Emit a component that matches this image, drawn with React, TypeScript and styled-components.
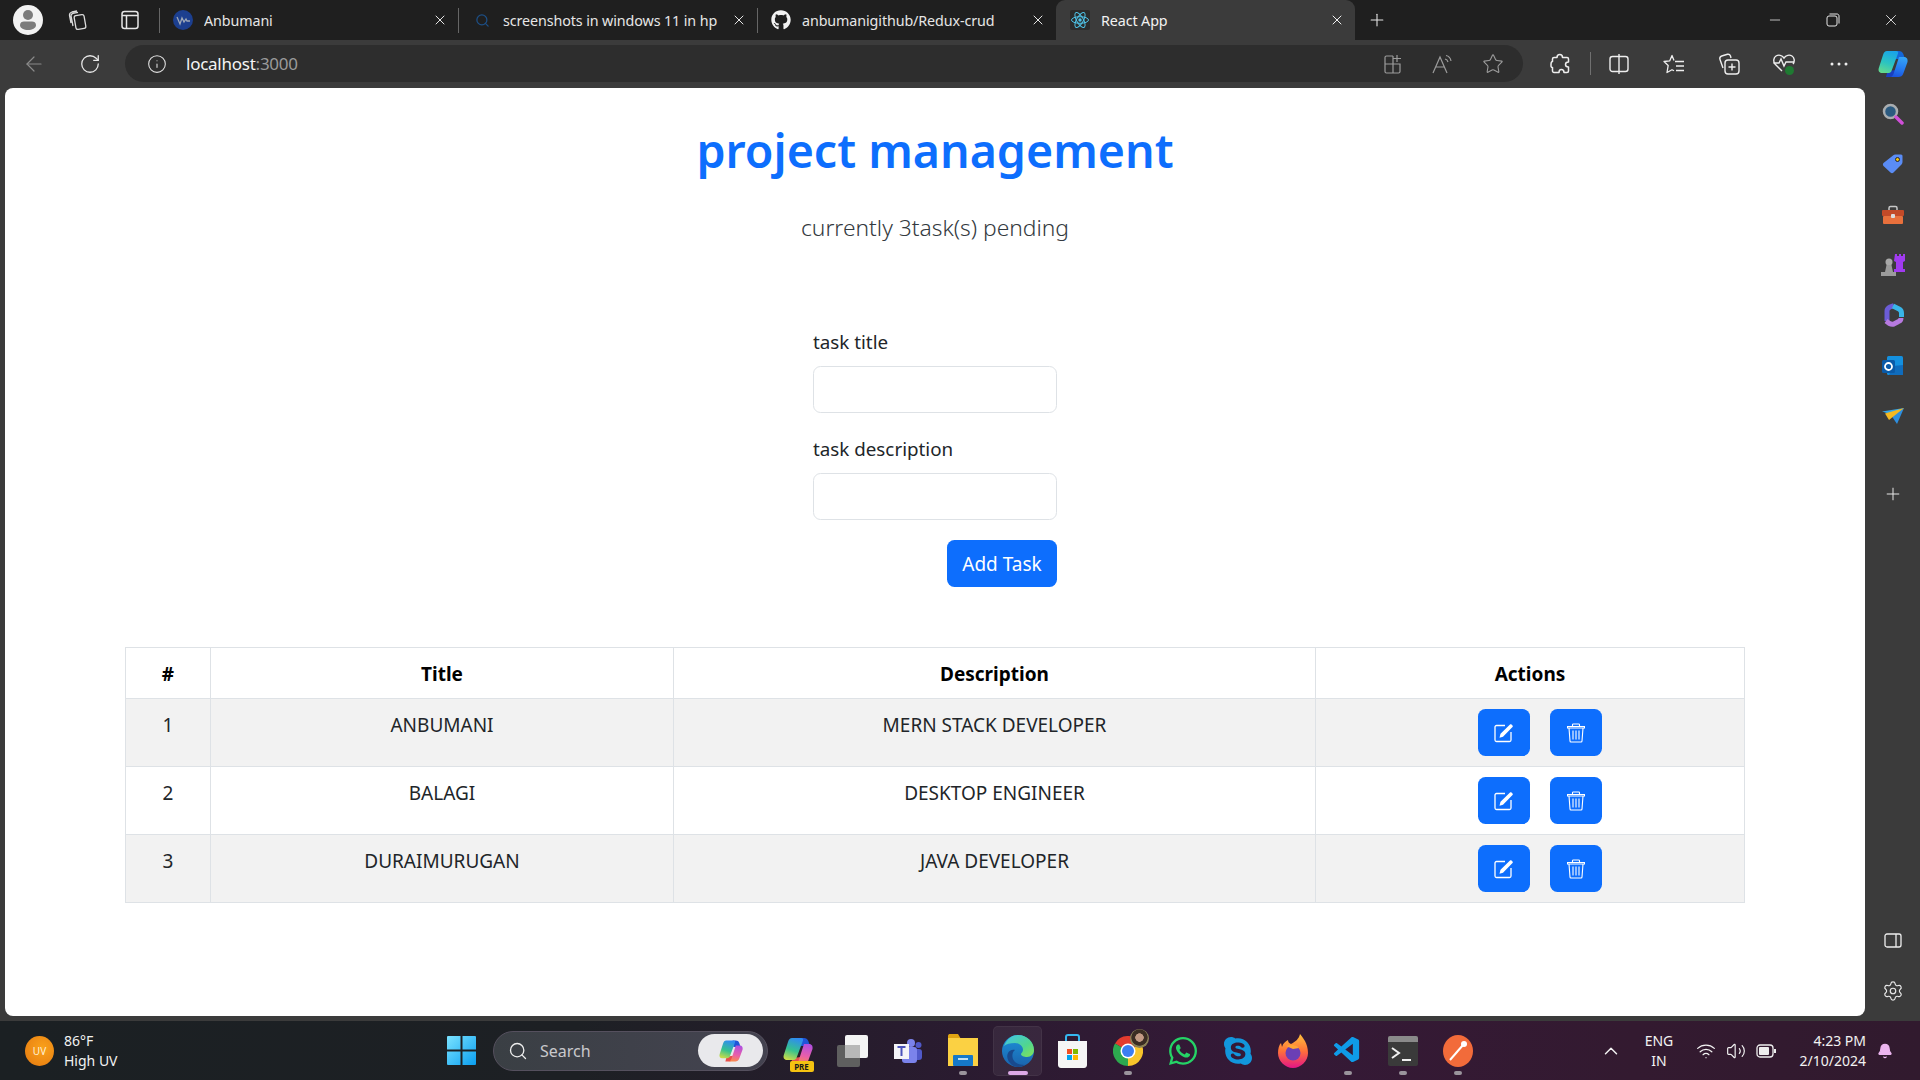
import React from 'react';
import styled, { createGlobalStyle } from 'styled-components';
import { ArrowLeft, Bell, ChevronUp, Info, Minus, Plus, RotateCw, Search, Settings, Star, Volume2, Wifi, X } from 'lucide-react';
import { FaGithub, FaSkype, FaWhatsapp } from 'react-icons/fa';
import { VscVscode } from 'react-icons/vsc';

const pageFont = `"Noto Sans", "Open Sans", Arial, sans-serif`;

const GlobalStyle = createGlobalStyle`
  html, body {
    margin: 0;
    padding: 0;
    height: 100%;
    overflow: hidden;
    background: #3b3b3b;
    font-family: ${pageFont};
  }
  * { box-sizing: border-box; }
`;

const Screen = styled.div`
  width: 1920px;
  height: 1080px;
  display: flex;
  flex-direction: column;
`;

/* tab strip */
const TabStrip = styled.div`
  height: 40px;
  flex: none;
  display: flex;
  align-items: stretch;
  background: #1f1f1f;
  color: #e6e6e6;
`;

const StripButton = styled.div<{ $w: number }>`
  width: ${(p) => p.$w}px;
  flex: none;
  display: flex;
  align-items: center;
  justify-content: center;
`;

const Avatar = styled.div`
  width: 30px;
  height: 30px;
  border-radius: 50%;
  background: #f2f2f2;
  display: flex;
  align-items: center;
  justify-content: center;
`;

const Tab = styled.div<{ $active?: boolean; $sep?: boolean }>`
  width: 299px;
  flex: none;
  position: relative;
  display: flex;
  align-items: center;
  padding-left: 14px;
  font-size: 14.3px;
  letter-spacing: -0.1px;
  background: ${(p) => (p.$active ? '#3b3b3b' : 'transparent')};
  border-radius: ${(p) => (p.$active ? '9px 9px 0 0' : '0')};
  color: ${(p) => (p.$active ? '#f2f2f2' : '#e6e6e6')};
  &::before {
    content: '';
    display: ${(p) => (p.$sep ? 'block' : 'none')};
    position: absolute;
    left: 0;
    top: 8px;
    bottom: 7px;
    width: 1px;
    background: #666;
  }
`;

const Favicon = styled.div`
  width: 20px;
  height: 20px;
  margin-right: 11px;
  flex: none;
  display: flex;
  align-items: center;
  justify-content: center;
`;

const TabTitle = styled.span`
  width: 222px;
  white-space: nowrap;
  overflow: hidden;
`;

const TabClose = styled.div`
  position: absolute;
  right: 10px;
  top: 12px;
  display: flex;
`;

const WindowControls = styled.div`
  margin-left: auto;
  display: flex;
  align-items: center;
`;

const WindowButton = styled.div`
  width: 58px;
  display: flex;
  justify-content: center;
`;

/* toolbar */
const Toolbar = styled.div`
  height: 48px;
  flex: none;
  display: flex;
  align-items: flex-start;
  padding: 5px 0 0 12px;
  background: #3b3b3b;
`;

const NavButton = styled.div<{ $dim?: boolean }>`
  width: 44px;
  height: 37px;
  margin-right: 12px;
  display: flex;
  align-items: center;
  justify-content: center;
  color: ${(p) => (p.$dim ? '#8a8a8a' : '#e8e8e8')};
`;

const AddressBar = styled.div`
  width: 1398px;
  height: 37px;
  margin-left: 1px;
  padding: 0 15px 0 22px;
  display: flex;
  align-items: center;
  border-radius: 19px;
  background: #2d2d2d;
  font-size: 17px;
  letter-spacing: -0.25px;
  color: #f4f4f4;
`;

const Port = styled.span`
  color: #9a9a9a;
`;

const InfoSlot = styled.div`
  display: flex;
  margin-right: 19px;
  color: #e0e0e0;
`;

const AddressTools = styled.div`
  margin-left: auto;
  display: flex;
  gap: 20px;
`;

const AddressTool = styled.div`
  width: 30px;
  height: 30px;
  display: flex;
  align-items: center;
  justify-content: center;
  color: #9c9c9c;
`;

const ToolSlot = styled.div<{ $w?: number; $ml?: number }>`
  width: ${(p) => p.$w ?? 55}px;
  height: 37px;
  margin-left: ${(p) => p.$ml ?? 0}px;
  flex: none;
  display: flex;
  align-items: center;
  justify-content: center;
  color: #e8e8e8;
`;

const ToolDivider = styled.div`
  width: 1px;
  height: 23px;
  margin: 7px 0 0 3px;
  background: #707070;
`;

/* main area */
const Body = styled.div`
  flex: 1;
  min-height: 0;
  display: flex;
  padding: 0 0 5px 5px;
  background: #3b3b3b;
`;

const Page = styled.main`
  width: 1860px;
  flex: none;
  padding: 32px 120px 0;
  background: #fff;
  border-radius: 8px;
  color: #212529;
`;

const Heading = styled.h1`
  margin: 0;
  font-size: 46.5px;
  line-height: 60px;
  font-weight: 600;
  text-align: center;
  color: #0d6efd;
`;

const Lead = styled.p`
  margin: 29px 0 0;
  font-size: 22.8px;
  line-height: 38px;
  font-weight: 300;
  text-align: center;
  color: #343a40;
`;

const TaskForm = styled.form`
  width: 244px;
  margin: 80px auto 0;
  display: flex;
  flex-direction: column;
`;

const FieldLabel = styled.label`
  font-size: 18.8px;
  line-height: 30px;
  margin-bottom: 9px;
`;

const FieldInput = styled.input`
  height: 47px;
  margin-bottom: 21px;
  border: 1px solid #dee2e6;
  border-radius: 7.5px;
  background: #fff;
`;

const PrimaryButton = styled.button`
  height: 47px;
  border: 0;
  border-radius: 7.5px;
  background: #0d6efd;
  color: #fff;
  font-family: inherit;
  font-size: 19px;
  display: inline-flex;
  align-items: center;
  justify-content: center;
`;

const AddButton = styled(PrimaryButton)`
  width: 110px;
  margin-top: -1px;
  align-self: flex-end;
`;

const TaskTable = styled.table`
  width: 1619px;
  margin-top: 60px;
  table-layout: fixed;
  border-collapse: collapse;
  font-size: 19px;
  line-height: 30px;
`;

const HeadCell = styled.th`
  height: 51px;
  padding: 11px 10px 9px;
  border: 1px solid #dee2e6;
  font-weight: 700;
  color: #000;
  text-align: center;
`;

const Row = styled.tr<{ $striped: boolean }>`
  background: ${(p) => (p.$striped ? '#f2f2f2' : '#fff')};
`;

const Cell = styled.td`
  height: 68px;
  padding: 11px 10px 9px;
  border: 1px solid #dee2e6;
  text-align: center;
  vertical-align: top;
`;

const ActionButton = styled(PrimaryButton)`
  width: 52px;
  margin: -1px 0 0 20px;
  vertical-align: top;
`;

/* edge sidebar */
const Sidebar = styled.aside`
  flex: 1;
  display: flex;
  flex-direction: column;
  align-items: center;
  color: #e8e8e8;
`;

const SideIcon = styled.div`
  height: 50.3px;
  width: 100%;
  flex: none;
  display: flex;
  align-items: center;
  justify-content: center;
`;

const SideIcons = styled.div`
  width: 100%;
  padding-top: 1px;
`;

const SideRule = styled.div<{ $mt: number; $mb: number }>`
  width: 35px;
  height: 1px;
  margin: ${(p) => p.$mt}px 0 ${(p) => p.$mb}px;
  background: #6e6e6e;
`;

/* windows taskbar */
const Taskbar = styled.footer`
  height: 59px;
  flex: none;
  display: flex;
  align-items: center;
  background: linear-gradient(90deg, #1b2023 0%, #1d2024 30%, #2a1b30 50%, #351937 65%, #331a30 85%, #311a2e 100%);
  color: #f2f2f2;
`;

const Weather = styled.div`
  width: 433px;
  flex: none;
  padding-left: 25px;
  display: flex;
  align-items: center;
  gap: 10px;
`;

const UvBadge = styled.div`
  width: 29px;
  height: 30px;
  border-radius: 50%;
  background: radial-gradient(circle at 60% 40%, #f9a11b, #e5780f);
  display: flex;
  align-items: center;
  justify-content: center;
  font-size: 10px;
  color: #fff1d6;
`;

const WeatherText = styled.div`
  font-size: 14px;
  line-height: 20px;
`;

const StartButton = styled.div`
  width: 56px;
  flex: none;
  display: flex;
  justify-content: center;
`;

const SearchPill = styled.div`
  width: 275px;
  height: 40px;
  margin-left: 4px;
  flex: none;
  padding: 0 4px 0 14px;
  display: flex;
  align-items: center;
  gap: 12px;
  border-radius: 20px;
  border: 1px solid #55505e;
  background: linear-gradient(90deg, #3a3f44, #444350);
  font-size: 16px;
  color: #c9c9cc;
`;

const CopilotChip = styled.div`
  width: 65px;
  height: 33px;
  margin-left: auto;
  border-radius: 17px;
  background: #e9e9ec;
  display: flex;
  align-items: center;
  justify-content: center;
`;

const AppTray = styled.div`
  margin-left: 2px;
  display: flex;
`;

const AppSlot = styled.div<{ $running?: boolean; $focused?: boolean }>`
  width: 55px;
  height: 50px;
  position: relative;
  display: flex;
  align-items: center;
  justify-content: center;
  &::before {
    content: '';
    display: ${(p) => (p.$focused ? 'block' : 'none')};
    position: absolute;
    inset: 0 3px;
    border-radius: 5px;
    background: rgba(255, 255, 255, 0.06);
    border: 1px solid rgba(255, 255, 255, 0.05);
  }
  &::after {
    content: '';
    display: ${(p) => (p.$running || p.$focused ? 'block' : 'none')};
    position: absolute;
    bottom: 1px;
    left: 50%;
    transform: translateX(-50%);
    width: ${(p) => (p.$focused ? 20 : 8)}px;
    height: 4px;
    border-radius: 2px;
    background: ${(p) => (p.$focused ? '#dca9e6' : '#9a949c')};
  }
`;

const AppIconFrame = styled.div`
  position: relative;
  display: flex;
`;

const PreBadge = styled.span`
  position: absolute;
  left: 7px;
  bottom: -6px;
  width: 24px;
  height: 11px;
  border-radius: 2px;
  background: #f5c211;
  color: #1a1a1a;
  font-size: 8px;
  line-height: 11px;
  font-weight: 700;
  text-align: center;
`;

const ChromeAvatar = styled.div`
  position: absolute;
  top: -7px;
  right: -6px;
  width: 19px;
  height: 19px;
  border-radius: 50%;
  background: radial-gradient(circle at 50% 45%, #c39a84 0 28%, #3b2d23 32% 55%, #8a8156 60%);
`;

const SystemTray = styled.div`
  margin-left: auto;
  padding-right: 27px;
  display: flex;
  align-items: center;
`;

const TrayIcon = styled.div<{ $w: number; $mr?: number }>`
  width: ${(p) => p.$w}px;
  margin-right: ${(p) => p.$mr ?? 0}px;
  display: flex;
  justify-content: center;
`;

const Lang = styled.div`
  width: 48px;
  margin-right: 8px;
  text-align: center;
  font-size: 14px;
  line-height: 20px;
`;

const Clock = styled.div`
  width: 85px;
  margin-right: 11px;
  text-align: right;
  font-size: 14px;
  line-height: 20px;
`;

/* drawn icons */
const WorkspacesIcon = () => (
  <svg width="20" height="22" viewBox="0 0 20 22" fill="none" stroke="#ddd" strokeWidth="1.3">
    <rect x="7" y="6" width="10" height="14" rx="2" transform="rotate(-10 12 13)" />
    <path d="M5 17 3 7c0-1.500 1-2.500 2-2.700L10 3.300M3 14 1.500 6.500C1.300 4.500 2.500 3.500 4 3L9 2" />
  </svg>
);

const VerticalTabsIcon = () => (
  <svg width="18" height="20" viewBox="0 0 18 20" fill="none" stroke="#e6e6e6" strokeWidth="1.5">
    <rect x="1" y="1.500" width="16" height="17" rx="2.500" />
    <path d="M1 5.500h16M5.500 5.500v13" />
  </svg>
);

const PersonIcon = () => (
  <svg width="18" height="22" viewBox="0 0 18 22" fill="#7b7b7b">
    <circle cx="9" cy="6" r="5" />
    <path d="M1 16c0-2.500 2-3.500 4-3.500h8c2 0 4 1 4 3.500 0 3.500-4 5-8 5s-8-1.500-8-5z" />
  </svg>
);

const WaveFavicon = () => (
  <svg width="20" height="20" viewBox="0 0 20 20">
    <circle cx="10" cy="10" r="10" fill="#1c3f8f" />
    <path d="M4 7l3 7 2-6 2 4 2-3 1 2h3" fill="none" stroke="#9fa9b8" strokeWidth="1.3" />
  </svg>
);

const ReactFavicon = () => (
  <svg width="20" height="20" viewBox="0 0 20 20" fill="none" stroke="#4fc3e8" strokeWidth="1">
    <rect width="20" height="20" rx="2" fill="#2b2b2b" stroke="none" />
    <ellipse cx="10" cy="10" rx="8.500" ry="3.300" />
    <ellipse cx="10" cy="10" rx="8.500" ry="3.300" transform="rotate(60 10 10)" />
    <ellipse cx="10" cy="10" rx="8.500" ry="3.300" transform="rotate(120 10 10)" />
    <circle cx="10" cy="10" r="1.700" fill="#4fc3e8" stroke="none" />
  </svg>
);

const RestoreIcon = () => (
  <svg width="14" height="14" viewBox="0 0 14 14" fill="none" stroke="#e6e6e6" strokeWidth="1">
    <rect x="1" y="3" width="10" height="10" rx="2" />
    <path d="M3.500 1H11c1.200 0 2 .8 2 2v7.500" />
  </svg>
);

const AppsPlusIcon = () => (
  <svg width="18" height="20" viewBox="0 0 18 20" fill="none" stroke="currentColor" strokeWidth="1.2">
    <path d="M9 2H2.500C1.700 2 1 2.700 1 3.500V17.500C1 18.300 1.700 19 2.500 19h12c.8 0 1.500-.7 1.500-1.500V10H1M9 2v17M13 1v7M9.500 4.500H17" />
  </svg>
);

const ReadAloudIcon = () => (
  <svg width="22" height="20" viewBox="0 0 22 20" fill="none" stroke="currentColor" strokeWidth="1.2">
    <path d="M1 19 8 3l7 16M3.500 13h9M13 5c1.500.3 2.500 1.300 3 3M14 1.500c2.500.5 4.500 2.500 5 5.500" />
  </svg>
);

const ExtensionIcon = () => (
  <svg width="20" height="22" viewBox="0 0 20 22" fill="none" stroke="#eee" strokeWidth="1.5" strokeLinejoin="round">
    <path d="M7 4.500C7 2.500 8.200 1.500 9.800 1.500S12.500 2.500 12.500 4.500H17c.8 0 1.500.7 1.500 1.500v3c-2 0-3 1.200-3 2.500s1 2.500 3 2.500v4c0 .8-.7 1.500-1.500 1.500h-3c0-2-1.300-3-2.700-3S9 17.500 9 19.500H4c-.8 0-1.500-.7-1.500-1.500v-3.500C.8 14.500 1 13 1 11.500S1 8.500 2.500 8.500V6C2.500 5 3.200 4.500 4 4.500z" />
  </svg>
);

const SplitIcon = () => (
  <svg width="20" height="22" viewBox="0 0 20 22" fill="none" stroke="#eee" strokeWidth="1.4">
    <rect x="1" y="3.500" width="18" height="15" rx="2.500" />
    <path d="M10 1v20" />
  </svg>
);

const FavoritesIcon = () => (
  <svg width="22" height="20" viewBox="0 0 22 20" fill="none" stroke="#eee" strokeWidth="1.3" strokeLinejoin="round">
    <path d="M11 6.500 9 1.500 6.800 6.800 1 7.500l4.200 3.900L4 18.500l5-2.800 2 1.100" />
    <path d="M12 7.500h9M13 12h8M13 16.500h8" />
  </svg>
);

const CollectionsIcon = () => (
  <svg width="22" height="22" viewBox="0 0 22 22" fill="none" stroke="#eee" strokeWidth="1.4">
    <path d="M5 15 2 6.500C1.500 5 2.200 3.500 3.700 3L9.500 1.300C11 1 12 1.700 12.500 3L13 5" />
    <rect x="7" y="7" width="14" height="14" rx="3" />
    <path d="M14 10.500v7M10.500 14h7" />
  </svg>
);

const HealthIcon = () => (
  <svg width="24" height="24" viewBox="0 0 24 24" fill="none" stroke="#eee" strokeWidth="1.4">
    <path d="M10 19 3 12C1 9.500 1.500 5.500 4 4c2.500-1.500 6-1 8 2 2-3 5.500-3.500 8-2 2.500 1.500 3 5.500 1 8" />
    <path d="M1.500 11H7l2-4 3 7 2-4h8" />
    <circle cx="17.500" cy="18.500" r="4.500" fill="#1f7a32" stroke="none" />
  </svg>
);

const CopilotIcon = ({ size, id, colorful }: { size: number; id: string; colorful?: boolean }) => (
  <svg width={size} height={size} viewBox="0 0 30 28">
    <defs>
      <linearGradient id={`${id}a`} x1="0.6" y1="0" x2="0.3" y2="1">
        <stop offset="0" stopColor={colorful ? '#2f8cf0' : '#1aa4e8'} />
        <stop offset="0.55" stopColor={colorful ? '#35c28f' : '#2cc4c0'} />
        <stop offset="1" stopColor={colorful ? '#c8dc4a' : '#63d98e'} />
      </linearGradient>
      <linearGradient id={`${id}b`} x1="0.6" y1="0" x2="0.4" y2="1">
        <stop offset="0" stopColor={colorful ? '#b04fe0' : '#35a4f5'} />
        <stop offset="0.6" stopColor={colorful ? '#ea5fa8' : '#2478f0'} />
        <stop offset="1" stopColor={colorful ? '#f98a4c' : '#1a55e0'} />
      </linearGradient>
    </defs>
    <path d="M17 1h4c2 0 3.500 1 4.300 3l1.700 5h-9z" fill={colorful ? '#1f55d8' : '#1467d8'} />
    <path d="M8 27h5c2 0 3.500-1 4.300-3l1.200-4-9 1z" fill={colorful ? '#e8504a' : '#1a3fc0'} />
    <path d="M9 1h9c2 0 2.500 1 2 2.500L13.500 21c-.5 1.500-2 2-3.500 2H4c-3 0-4-2.500-3.200-5L5 5c1-3 2-4 4-4z" fill={`url(#${id}a)`} />
    <path d="M21 7h5c3 0 4 2.500 3.500 5l-4 11c-1 3-3 4-5 4h-9c1.500 0 3-.5 4-3z" fill={`url(#${id}b)`} />
  </svg>
);

const SearchAppIcon = () => (
  <svg width="22" height="22" viewBox="0 0 22 22">
    <circle cx="8.500" cy="8.500" r="6.500" fill="#2b5a80" stroke="#a9adb0" strokeWidth="2.500" />
    <path d="M14 14l6 6" stroke="#d04fd8" strokeWidth="3.500" strokeLinecap="round" />
  </svg>
);

const TagIcon = () => (
  <svg width="22" height="22" viewBox="0 0 22 22">
    <path d="M11 2.500c.7-.7 1.500-1 2.500-1H19c1 0 1.500.8 1.500 1.500v6c0 1-.3 1.700-1 2.400l-8 8c-1 1-2 1-3 0L1.500 13c-.8-1-.8-2 0-3z" fill="#5a8cf5" />
    <circle cx="15.500" cy="6.500" r="2" fill="#f1c40f" stroke="#223" strokeWidth="1" />
  </svg>
);

const ToolboxIcon = () => (
  <svg width="24" height="20" viewBox="0 0 24 20">
    <path d="M8 6V3c0-1 .5-1.500 1.500-1.500h5C15.500 1.500 16 2 16 3v3" fill="none" stroke="#c7c7c7" strokeWidth="1.500" />
    <rect x="1" y="5" width="22" height="6" rx="1" fill="#c34a28" />
    <rect x="2" y="11" width="20" height="8" rx="1" fill="#e8703c" />
    <rect x="10" y="9" width="4" height="4" rx="1" fill="#ddd" />
  </svg>
);

const ChessIcon = () => (
  <svg width="24" height="24" viewBox="0 0 24 24">
    <path d="M14 1h2v2h2V1h2v2h2V1h2v7l-2 1v7h2v3H13v-3h2V9l-2-1z" fill="#a13bf0" />
    <circle cx="8" cy="9" r="3.500" fill="#a8a8a8" />
    <path d="M5.500 12h5l1.500 7h3v4H0v-4h4z" fill="#9b9b9b" />
  </svg>
);

const M365Icon = () => (
  <svg width="22" height="24" viewBox="0 0 22 24" fill="none" strokeWidth="5">
    <path d="M5 18V8c0-2 1-3 3-4l4-1.500" stroke="#6b5cd6" />
    <path d="M11 3l6 3c2 1 2.500 2 2.500 4v4" stroke="#38b5e8" />
    <path d="M19 15c0 2-1 3-2.500 3.500L12 21c-2 .5-3 .3-4.500-.5L4 18" stroke="#b77ae0" />
    <circle cx="11.500" cy="12" r="3" fill="#3b3b3b" stroke="none" />
  </svg>
);

const OutlookIcon = () => (
  <svg width="22" height="21" viewBox="0 0 22 21">
    <rect x="5" y="1" width="16" height="19" rx="1.500" fill="#1490df" />
    <path d="M11 11l10-1v9c0 .6-.5 1-1 1H7z" fill="#0f6cbd" />
    <rect x="0" y="5" width="13" height="13" rx="1.500" fill="#0a5aa8" />
    <circle cx="6.500" cy="11.500" r="3.500" fill="none" stroke="#fff" strokeWidth="1.800" />
  </svg>
);

const SendIcon = () => (
  <svg width="22" height="16" viewBox="0 0 22 16">
    <path d="M0 3.500 22 0 8 6z" fill="#35a7ea" />
    <path d="M8 6 22 0l-7 16-4-6z" fill="#2e8fe0" />
    <path d="M3 5.500 22 0 7 12z" fill="#f5b921" />
  </svg>
);

const PanelIcon = () => (
  <svg width="18" height="15" viewBox="0 0 18 15" fill="none" stroke="#eee" strokeWidth="1.300">
    <rect x="1" y="1" width="16" height="13" rx="2" />
    <path d="M12 1v13" />
  </svg>
);

const WindowsLogo = () => (
  <svg width="29" height="29" viewBox="0 0 29 29">
    <defs>
      <linearGradient id="win" x1="0" y1="0" x2="1" y2="1">
        <stop offset="0" stopColor="#7be3ff" />
        <stop offset="1" stopColor="#0a9ef0" />
      </linearGradient>
    </defs>
    <path d="M0 1a1 1 0 0 1 1-1h12.500v13.500H0zM15.500 0H28a1 1 0 0 1 1 1v12.500H15.500zM0 15.500h13.500V29H1a1 1 0 0 1-1-1zM15.500 15.500H29V28a1 1 0 0 1-1 1H15.500z" fill="url(#win)" />
  </svg>
);

const CopyStackIcon = () => (
  <svg width="31" height="32" viewBox="0 0 31 32">
    <rect x="0" y="10" width="23" height="22" rx="2" fill="#5f5f5f" />
    <rect x="8" y="0" width="23" height="23" rx="2" fill="#f4f4f4" />
    <rect x="8" y="10" width="15" height="13" fill="#b8b8b8" />
  </svg>
);

const TeamsIcon = () => (
  <svg width="28" height="26" viewBox="0 0 28 26">
    <circle cx="17" cy="5" r="4" fill="#7b83eb" />
    <circle cx="24.500" cy="7" r="3" fill="#5059c9" />
    <rect x="19" y="11" width="9" height="11" rx="3" fill="#5059c9" />
    <rect x="8" y="9" width="15" height="16" rx="3" fill="#7b83eb" />
    <rect x="0" y="6" width="15" height="15" fill="#f4f4f8" />
    <path d="M3.500 9h8M7.500 9v9" stroke="#4b53bc" strokeWidth="2" />
  </svg>
);

const FolderIcon = () => (
  <svg width="30" height="36" viewBox="0 0 30 36">
    <path d="M0 3c0-1.500 1-2 2-2h8l3 5H0z" fill="#e0a412" />
    <path d="M0 5h30v28H0z" fill="#fbd143" />
    <rect x="5" y="22" width="20" height="11" rx="1" fill="#1679c9" />
    <rect x="10" y="25" width="10" height="2" fill="#bfe0f5" />
  </svg>
);

const EdgeIcon = () => (
  <svg width="32" height="32" viewBox="0 0 32 32">
    <defs>
      <linearGradient id="edgeA" x1="0" y1="0" x2="1" y2="1">
        <stop offset="0" stopColor="#37c0e8" />
        <stop offset="0.6" stopColor="#45d48a" />
        <stop offset="1" stopColor="#7fe04a" />
      </linearGradient>
      <linearGradient id="edgeB" x1="0" y1="0" x2="0" y2="1">
        <stop offset="0" stopColor="#0f8bd8" />
        <stop offset="1" stopColor="#0c5aa8" />
      </linearGradient>
    </defs>
    <circle cx="16" cy="16" r="16" fill="url(#edgeB)" />
    <path d="M2 11C5 3 11 0 16 0c9 0 16 7 16 15 0 4-3 7-7 7-3 0-6-1-6-3 0-1 2-2 2-4 0-4-4-7-8-7-5 0-9 1-11 3z" fill="url(#edgeA)" />
    <path d="M13 15c-3 2-4 8 0 12 2 2 6 3 10 3-5 3-10 2-13 0-4-3-6-8-4-12 1-2 4-4 7-3z" fill="#0b3f86" />
  </svg>
);

const StoreIcon = () => (
  <svg width="29" height="34" viewBox="0 0 29 34">
    <path d="M8 8V3c0-1 .5-2 2-2h9c1.500 0 2 1 2 2v5" fill="none" stroke="#35b7ef" strokeWidth="2" />
    <path d="M0 7h29v24c0 1.500-1 3-3 3H3c-2 0-3-1.500-3-3z" fill="#f5f5f5" />
    <rect x="9" y="15" width="5" height="5" fill="#f25022" />
    <rect x="15" y="15" width="5" height="5" fill="#7fba00" />
    <rect x="9" y="21" width="5" height="5" fill="#00a4ef" />
    <rect x="15" y="21" width="5" height="5" fill="#ffb900" />
  </svg>
);

const ChromeIcon = () => (
  <svg width="30" height="30" viewBox="0 0 30 30">
    <path d="M15 15 2 7.500A15 15 0 0 1 28 7.500z" fill="#e33b2e" />
    <path d="M15 15 28 7.500A15 15 0 0 1 15 30z" fill="#f8c52b" />
    <path d="M15 15 15 30A15 15 0 0 1 2 7.500z" fill="#2da94f" />
    <circle cx="15" cy="15" r="7.500" fill="#fff" />
    <circle cx="15" cy="15" r="6" fill="#3b7ef2" />
  </svg>
);

const FirefoxIcon = () => (
  <svg width="30" height="34" viewBox="0 0 30 34">
    <defs>
      <linearGradient id="fox" x1="0.500" y1="0" x2="0.500" y2="1">
        <stop offset="0" stopColor="#ffc13b" />
        <stop offset="0.5" stopColor="#ff7139" />
        <stop offset="1" stopColor="#e31587" />
      </linearGradient>
    </defs>
    <path d="M22 0c3 4 8 9 8 19 0 8-7 15-15 15S0 27 0 19c0-4 1-8 3-10l1 4c1-4 4-6 6-7 0 2 1 3 3 4 4-2 8-5 9-10z" fill="url(#fox)" />
    <circle cx="15" cy="19" r="7.500" fill="#6b3fb5" />
    <path d="M8 12c4-2 10-2 13 2l-6 1z" fill="#ffa436" />
  </svg>
);

const TerminalIcon = () => (
  <svg width="30" height="30" viewBox="0 0 30 30">
    <rect width="30" height="30" rx="2" fill="#3a3a3a" />
    <path d="M0 2a2 2 0 0 1 2-2h26a2 2 0 0 1 2 2v4H0z" fill="#8a8a8a" />
    <path d="M4 12l7 5-7 5" fill="none" stroke="#f0f0f0" strokeWidth="2" />
    <path d="M14 24h9" stroke="#f0f0f0" strokeWidth="2" />
  </svg>
);

const PostmanIcon = () => (
  <svg width="30" height="32" viewBox="0 0 30 32">
    <ellipse cx="15" cy="16" rx="15" ry="16" fill="#f26b3a" />
    <path d="M7 25 20 10" stroke="#fff" strokeWidth="2" />
    <circle cx="21" cy="9" r="3" fill="#fff" />
  </svg>
);

const BatteryIcon = () => (
  <svg width="20" height="14" viewBox="0 0 20 14" fill="none" stroke="#eee" strokeWidth="1.300">
    <rect x="1" y="1" width="16" height="12" rx="3" />
    <rect x="3" y="3" width="10" height="8" rx="1" fill="#eee" stroke="none" />
    <path d="M19 5v4" strokeWidth="2" />
  </svg>
);

const EditIcon = () => (
  <svg width="20" height="20" viewBox="0 0 20 20" fill="none" stroke="#fff" strokeWidth="1.300">
    <path d="M11 2.500H2.500c-.8 0-1.500.6-1.500 1.500v13c0 .8.700 1.500 1.500 1.500h13c.8 0 1.500-.7 1.500-1.500V9" />
    <path d="M5.500 14.800l1-4L16 1.500c.5-.5 1-.5 1.500 0l1 1c.5.500.5 1 0 1.500L9 13.800z" fill="#fff" stroke="none" />
  </svg>
);

const TrashIcon = () => (
  <svg width="18" height="20" viewBox="0 0 18 20" fill="none" stroke="#fff" strokeWidth="1.100">
    <path d="M5.500 3V1.800c0-.5.400-.8.800-.8h5.400c.4 0 .8.300.8.800V3" />
    <path d="M.5 3.500h17v1.500H.5z" />
    <path d="M2 5l1 13c0 .6.500 1 1 1h10c.5 0 1-.4 1-1l1-13" />
    <path d="M6 7.500v9M9 7.500v9M12 7.500v9" />
  </svg>
);

const tabs = [
  { title: 'Anbumani', icon: <WaveFavicon /> },
  { title: 'screenshots in windows 11 in hp', icon: <Search size={15} color="#1d4f86" strokeWidth={2} /> },
  { title: 'anbumanigithub/Redux-crud', icon: <FaGithub size={20} color="#f2f2f2" /> },
];

const tasks = [
  { id: 1, title: 'ANBUMANI', description: 'MERN STACK DEVELOPER' },
  { id: 2, title: 'BALAGI', description: 'DESKTOP ENGINEER' },
  { id: 3, title: 'DURAIMURUGAN', description: 'JAVA DEVELOPER' },
];

const App = () => {
  return (
    <Screen>
      <GlobalStyle />
      <TabStrip>
        <StripButton $w={56}>
          <Avatar><PersonIcon /></Avatar>
        </StripButton>
        <StripButton $w={44}><WorkspacesIcon /></StripButton>
        <StripButton $w={59}><VerticalTabsIcon /></StripButton>
        {tabs.map((tab) => (
          <Tab key={tab.title} $sep>
            <Favicon>{tab.icon}</Favicon>
            <TabTitle>{tab.title}</TabTitle>
            <TabClose><X size={16} strokeWidth={1.5} /></TabClose>
          </Tab>
        ))}
        <Tab $active>
          <Favicon><ReactFavicon /></Favicon>
          <TabTitle>React App</TabTitle>
          <TabClose><X size={16} strokeWidth={1.5} /></TabClose>
        </Tab>
        <StripButton $w={44}><Plus size={20} strokeWidth={1.3} /></StripButton>
        <WindowControls>
          <WindowButton><Minus size={16} strokeWidth={1.2} /></WindowButton>
          <WindowButton><RestoreIcon /></WindowButton>
          <WindowButton><X size={18} strokeWidth={1.2} /></WindowButton>
        </WindowControls>
      </TabStrip>

      <Toolbar>
        <NavButton $dim><ArrowLeft size={24} strokeWidth={1.2} /></NavButton>
        <NavButton><RotateCw size={22} strokeWidth={1.4} /></NavButton>
        <AddressBar>
          <InfoSlot><Info size={20} strokeWidth={1.3} /></InfoSlot>
          <span>localhost<Port>:3000</Port></span>
          <AddressTools>
            <AddressTool><AppsPlusIcon /></AddressTool>
            <AddressTool><ReadAloudIcon /></AddressTool>
            <AddressTool><Star size={22} strokeWidth={1.2} /></AddressTool>
          </AddressTools>
        </AddressBar>
        <ToolSlot $ml={9}><ExtensionIcon /></ToolSlot>
        <ToolDivider />
        <ToolSlot><SplitIcon /></ToolSlot>
        <ToolSlot><FavoritesIcon /></ToolSlot>
        <ToolSlot><CollectionsIcon /></ToolSlot>
        <ToolSlot><HealthIcon /></ToolSlot>
        <ToolSlot>
          <svg width="18" height="4" viewBox="0 0 18 4" fill="#eee">
            <circle cx="2" cy="2" r="1.500" /><circle cx="9" cy="2" r="1.500" /><circle cx="16" cy="2" r="1.500" />
          </svg>
        </ToolSlot>
        <ToolSlot $w={42} $ml={6}><CopilotIcon size={30} id="bar" /></ToolSlot>
      </Toolbar>

      <Body>
        <Page>
          <Heading>project management</Heading>
          <Lead>currently 3task(s) pending</Lead>
          <TaskForm>
            <FieldLabel>task title</FieldLabel>
            <FieldInput />
            <FieldLabel>task description</FieldLabel>
            <FieldInput />
            <AddButton type="button">Add Task</AddButton>
          </TaskForm>
          <TaskTable>
            <colgroup>
              <col width="85" />
              <col width="463" />
              <col width="642" />
              <col width="429" />
            </colgroup>
            <thead>
              <tr>
                <HeadCell>#</HeadCell>
                <HeadCell>Title</HeadCell>
                <HeadCell>Description</HeadCell>
                <HeadCell>Actions</HeadCell>
              </tr>
            </thead>
            <tbody>
              {tasks.map((task, i) => (
                <Row key={task.id} $striped={i % 2 === 0}>
                  <Cell>{task.id}</Cell>
                  <Cell>{task.title}</Cell>
                  <Cell>{task.description}</Cell>
                  <Cell>
                    <ActionButton type="button"><EditIcon /></ActionButton>
                    <ActionButton type="button"><TrashIcon /></ActionButton>
                  </Cell>
                </Row>
              ))}
            </tbody>
          </TaskTable>
        </Page>
        <Sidebar>
          <SideIcons>
            <SideIcon><SearchAppIcon /></SideIcon>
            <SideIcon><TagIcon /></SideIcon>
            <SideIcon><ToolboxIcon /></SideIcon>
            <SideIcon><ChessIcon /></SideIcon>
            <SideIcon><M365Icon /></SideIcon>
            <SideIcon><OutlookIcon /></SideIcon>
            <SideIcon><SendIcon /></SideIcon>
          </SideIcons>
          <SideRule $mt={15} $mb={13} />
          <SideIcon><Plus size={20} strokeWidth={1.2} /></SideIcon>
          <SideRule $mt={394} $mb={2} />
          <SideIcon><PanelIcon /></SideIcon>
          <SideIcon><Settings size={22} strokeWidth={1.3} /></SideIcon>
        </Sidebar>
      </Body>

      <Taskbar>
        <Weather>
          <UvBadge>UV</UvBadge>
          <WeatherText>86°F<br />High UV</WeatherText>
        </Weather>
        <StartButton><WindowsLogo /></StartButton>
        <SearchPill>
          <Search size={20} strokeWidth={1.6} color="#eee" />
          <span>Search</span>
          <CopilotChip><CopilotIcon size={24} id="chip" colorful /></CopilotChip>
        </SearchPill>
        <AppTray>
          <AppSlot>
            <AppIconFrame>
              <CopilotIcon size={30} id="pre" colorful />
              <PreBadge>PRE</PreBadge>
            </AppIconFrame>
          </AppSlot>
          <AppSlot><CopyStackIcon /></AppSlot>
          <AppSlot><TeamsIcon /></AppSlot>
          <AppSlot $running><FolderIcon /></AppSlot>
          <AppSlot $focused><EdgeIcon /></AppSlot>
          <AppSlot><StoreIcon /></AppSlot>
          <AppSlot $running>
            <AppIconFrame>
              <ChromeIcon />
              <ChromeAvatar />
            </AppIconFrame>
          </AppSlot>
          <AppSlot><FaWhatsapp size={32} color="#25d366" /></AppSlot>
          <AppSlot><FaSkype size={32} color="#1296dc" /></AppSlot>
          <AppSlot><FirefoxIcon /></AppSlot>
          <AppSlot $running><VscVscode size={31} color="#0f9be8" /></AppSlot>
          <AppSlot $running><TerminalIcon /></AppSlot>
          <AppSlot $running><PostmanIcon /></AppSlot>
        </AppTray>
        <SystemTray>
          <TrayIcon $w={30} $mr={9}><ChevronUp size={22} strokeWidth={1.6} /></TrayIcon>
          <Lang>ENG<br />IN</Lang>
          <TrayIcon $w={30}><Wifi size={20} strokeWidth={1.5} /></TrayIcon>
          <TrayIcon $w={30}><Volume2 size={20} strokeWidth={1.4} /></TrayIcon>
          <TrayIcon $w={30}><BatteryIcon /></TrayIcon>
          <Clock>4:23 PM<br />2/10/2024</Clock>
          <TrayIcon $w={16}><Bell size={18} color="#ecb5ef" fill="#ecb5ef" /></TrayIcon>
        </SystemTray>
      </Taskbar>
    </Screen>
  );
};

export default App;
